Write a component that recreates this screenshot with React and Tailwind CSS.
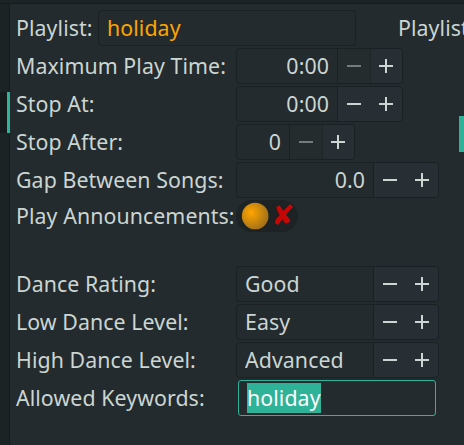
function Glyph({ plus, dim }) {
  const tone = dim ? "bg-[#757b7d]" : "bg-[#cbd5d2]";
  return (
    <span className="grid h-[14px] w-[14px] place-items-center">
      <span className={"col-start-1 row-start-1 h-[2px] w-[14px] " + tone} />
      {plus && <span className={"col-start-1 row-start-1 h-[14px] w-[2px] " + tone} />}
    </span>
  );
}

function Spin({ width, value, left, minusOff }) {
  return (
    <div className={"flex h-9 overflow-hidden rounded-[4px] border border-[#1a2023] " + width}>
      <div className={"flex-1 px-2 leading-[34px] whitespace-nowrap " + (left ? "text-left" : "text-right")}>{value}</div>
      <button
        className={
          "flex w-[33px] items-center justify-center border-l border-[#1a2023] " +
          (minusOff ? "bg-[#252c2e]" : "bg-[#272e34]")
        }
      >
        <Glyph dim={minusOff} />
      </button>
      <button
        className={
          "flex w-8 items-center bg-[#272e34] " +
          (minusOff ? "border-l border-[#1f2529] pl-2" : "pl-[9px]")
        }
      >
        <Glyph plus />
      </button>
    </div>
  );
}

function Row({ label, children }) {
  return (
    <div className="flex h-9">
      <label className="w-[220px] shrink-0 leading-9 whitespace-nowrap">{label}</label>
      {children}
    </div>
  );
}

function Toggle() {
  return (
    <div className="flex h-8 w-[62px] items-center rounded-full bg-[#1d2224]">
      <svg className="shrink-0" width="35" height="32" viewBox="0 0 35 32">
        <defs>
          <radialGradient id="knob" cx="0.35" cy="0.38" r="0.65">
            <stop offset="0" stopColor="#ffa500" />
            <stop offset="1" stopColor="#a47218" />
          </radialGradient>
        </defs>
        <circle cx="19.2" cy="16" r="13.3" fill="url(#knob)" />
      </svg>
      <span className="font-['DejaVu_Sans',sans-serif] text-[28px] leading-8 tracking-normal text-[#c60505]">✘</span>
    </div>
  );
}

export default function App() {
  return (
    <div className="flex h-[445px] w-[464px] flex-col overflow-hidden bg-[#232b2e] font-['Noto_Sans',sans-serif] text-[21.33px] tracking-[0.08px] text-[#cbd5d2]">
      <div className="h-1 shrink-0 border-b border-[#161b1d] bg-[#1d2426]" />
      <div className="flex min-h-0 flex-1">
        <div className="w-[10px] shrink-0 border-r border-[#161b1d] bg-[#1c2325] pt-[88px]">
          <div className="h-[41px] w-[10px] border-r-[3px] border-[#2eb398] bg-[#161a1b]" />
        </div>
        <main className="flex w-[449px] shrink-0 flex-col gap-[2px] pt-[6px] pl-[6px]">
          <div className="flex h-9">
            <label className="w-[82px] shrink-0 leading-9">Playlist:</label>
            <div className="h-9 w-[258px] shrink-0 rounded-[4px] border border-[#1a2023] px-2 leading-[34px] text-[#ffa500]">holiday</div>
            <span className="ml-[42px] shrink-0 leading-9">Playlist</span>
          </div>
          <Row label="Maximum Play Time:"><Spin width="w-[167px]" value="0:00" minusOff /></Row>
          <Row label="Stop At:"><Spin width="w-[167px]" value="0:00" /></Row>
          <Row label="Stop After:"><Spin width="w-[119px]" value="0" minusOff /></Row>
          <Row label="Gap Between Songs:"><Spin width="w-[203px]" value="0.0" /></Row>
          <div className="flex h-8 items-center">
            <label className="w-[220px] shrink-0 leading-8 whitespace-nowrap">Play Announcements:</label>
            <Toggle />
          </div>
          <div className="h-[30px]" />
          <Row label="Dance Rating:"><Spin width="w-[203px]" value="Good" left /></Row>
          <Row label="Low Dance Level:"><Spin width="w-[203px]" value="Easy" left /></Row>
          <Row label="High Dance Level:"><Spin width="w-[203px]" value="Advanced" left /></Row>
          <Row label="Allowed Keywords:">
            <div className="ml-[2px] flex h-9 w-[198px] items-center rounded-[3px] border border-[#2eb398] px-2">
              <span className="h-[30px] bg-[#2eb398] leading-[30px] text-white">holiday</span>
            </div>
          </Row>
        </main>
        <div className="flex-1 pt-[112px]">
          <div className="h-9 w-[5px] bg-[#2eb398]" />
        </div>
      </div>
    </div>
  );
}
